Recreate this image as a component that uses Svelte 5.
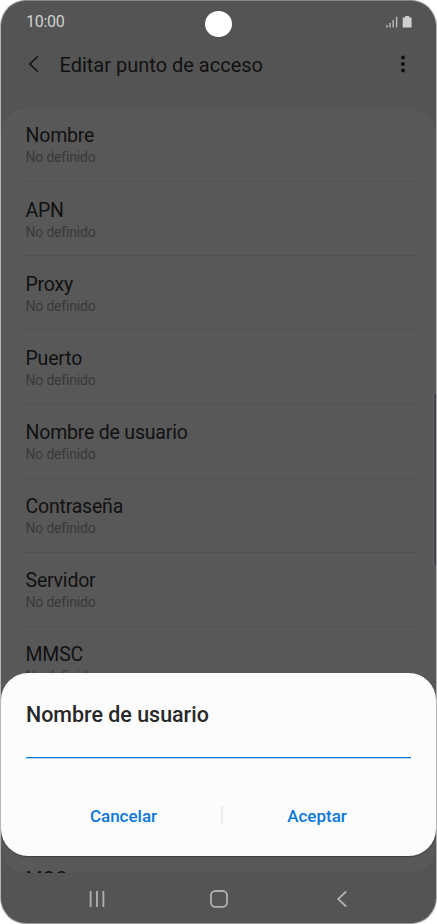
<script>
  const settings = [
    'Nombre',
    'APN',
    'Proxy',
    'Puerto',
    'Nombre de usuario',
    'Contraseña',
    'Servidor',
    'MMSC',
    'MCC'
  ];

  let username = $state('');
</script>

<div class="phone">
  <div class="status-bar">
    <span class="time">10:00</span>
    <svg class="status-icons" width="28" height="16" viewBox="0 0 28 16">
      <path d="M1 11v2.5M4 9v4.5M7.2 6v7.5M10.6 2.8v10.7" stroke="#bcbcbc" stroke-width="1.4" />
      <path d="M16.7 3.6h2.5V2.1h4v1.5h2.4v9.9h-8.9z" fill="#d0d0d0" />
    </svg>
  </div>

  <header>
    <svg class="back" width="12" height="18" viewBox="0 0 12 18">
      <path d="M9.8 1.2 1.8 9l8 7.8" fill="none" stroke="#111" stroke-width="1.6" />
    </svg>
    <h1>Editar punto de acceso</h1>
    <svg class="menu" width="6" height="18" viewBox="0 0 6 18" fill="#111">
      <circle cx="3" cy="2.5" r="2" />
      <circle cx="3" cy="9" r="2" />
      <circle cx="3" cy="15.5" r="2" />
    </svg>
  </header>

  <main>
    {#each settings as name (name)}
      <div class="row">
        <div class="name">{name}</div>
        {#if name !== 'MCC'}
          <div class="value">No definido</div>
        {/if}
      </div>
    {/each}
  </main>

  <nav>
    <svg width="18" height="18" viewBox="0 0 18 18">
      <path d="M2.6 1v16M9 1v16M15.4 1v16" stroke="#b0b0b0" stroke-width="1.8" />
    </svg>
    <svg width="18" height="18" viewBox="0 0 18 18">
      <rect x="1" y="1" width="16" height="15.8" rx="4.3" fill="none" stroke="#b0b0b0" stroke-width="1.8" />
    </svg>
    <svg width="18" height="18" viewBox="0 0 18 18">
      <path d="M13.2 1.5 5.1 9l8.1 7.5" fill="none" stroke="#b0b0b0" stroke-width="1.8" />
    </svg>
  </nav>

  <div class="camera"></div>
  <div class="edge-handle"></div>

  <div class="dialog">
    <h2>Nombre de usuario</h2>
    <input type="text" aria-label="Nombre de usuario" bind:value={username} />
    <div class="actions">
      <button>Cancelar</button>
      <span class="separator"></span>
      <button>Aceptar</button>
    </div>
  </div>
</div>

<style>
  :global(body) {
    background: #fff;
  }

  .phone {
    position: relative;
    display: flex;
    flex-direction: column;
    box-sizing: border-box;
    width: 437px;
    height: 924px;
    border: 1px solid #b4b4b4;
    border-top-color: #858585;
    border-bottom-color: #999;
    border-radius: 26px;
    background: #545454;
    font-family: Roboto, sans-serif;
    color: #111;
    overflow: hidden;
  }

  .status-bar {
    display: flex;
    align-items: center;
    justify-content: space-between;
    height: 41px;
    padding: 0 22px 0 25px;
    flex: none;
  }

  .time {
    font-size: 16px;
    letter-spacing: -0.25px;
    color: #d0d0d0;
  }

  header {
    display: flex;
    align-items: center;
    height: 46px;
    padding: 0 30px 0 27px;
    margin-bottom: 20px;
    flex: none;
  }

  .back,
  .menu {
    margin-top: -2px;
  }

  h1 {
    flex: 1;
    margin: -1px 0 0 19.5px;
    font-size: 20px;
    font-weight: 400;
  }

  main {
    height: 765px;
    box-sizing: border-box;
    padding: 0 20px;
    border-radius: 26px;
    background: #585858;
    box-shadow: 0 0 1px #505050;
    overflow: hidden;
    flex: none;
  }

  .row {
    box-sizing: border-box;
    height: 74.15px;
    padding: 16.45px 5px 0 4.5px;
    border-bottom: 1px solid #515151;
  }

  .row:last-child {
    margin-top: 150px;
  }

  .name {
    font-size: 19.5px;
    line-height: 24px;
    letter-spacing: -0.2px;
  }

  .value {
    font-size: 14px;
    line-height: 18px;
    letter-spacing: -0.18px;
    color: #393939;
  }

  nav {
    flex: 1;
    display: flex;
    align-items: center;
    justify-content: space-between;
    padding: 2px 85px 0 86.5px;
  }

  .camera {
    position: absolute;
    top: 10px;
    left: 204px;
    width: 27px;
    height: 26px;
    border-radius: 50%;
    background: #fff;
  }

  .edge-handle {
    position: absolute;
    top: 391px;
    right: 0;
    box-sizing: border-box;
    width: 3px;
    height: 175px;
    border: 1px solid #66666b;
    border-right: none;
    border-radius: 4px 0 0 4px;
    background: #40404c;
  }

  .dialog {
    position: absolute;
    top: 672px;
    left: 0;
    right: 0;
    box-sizing: border-box;
    height: 183px;
    padding: 29px 25px 0;
    border-radius: 27px;
    background: #fcfcfc;
    box-shadow: 0 1px 1px #414141;
  }

  h2 {
    margin: 0;
    font-size: 21.45px;
    line-height: 26px;
    font-weight: 500;
    color: #282828;
  }

  input {
    display: block;
    box-sizing: border-box;
    width: 100%;
    height: 30px;
    padding: 0;
    border: none;
    border-bottom: 1px solid #0878d1;
    outline: none;
    background: transparent;
    box-shadow: 0 1px 0 #b5d6f0;
    font: 18px Roboto, sans-serif;
  }

  .actions {
    display: flex;
    align-items: center;
    margin-top: 40px;
    height: 36px;
  }

  .separator {
    flex: none;
    width: 2px;
    height: 18px;
    margin-top: -3px;
    background: #ececec;
  }

  button {
    width: 195px;
    padding: 0;
    border: none;
    background: none;
    font: 500 17px Roboto, sans-serif;
    color: #0878d8;
    flex: none;
  }

  .separator + button {
    width: 188px;
  }
</style>
